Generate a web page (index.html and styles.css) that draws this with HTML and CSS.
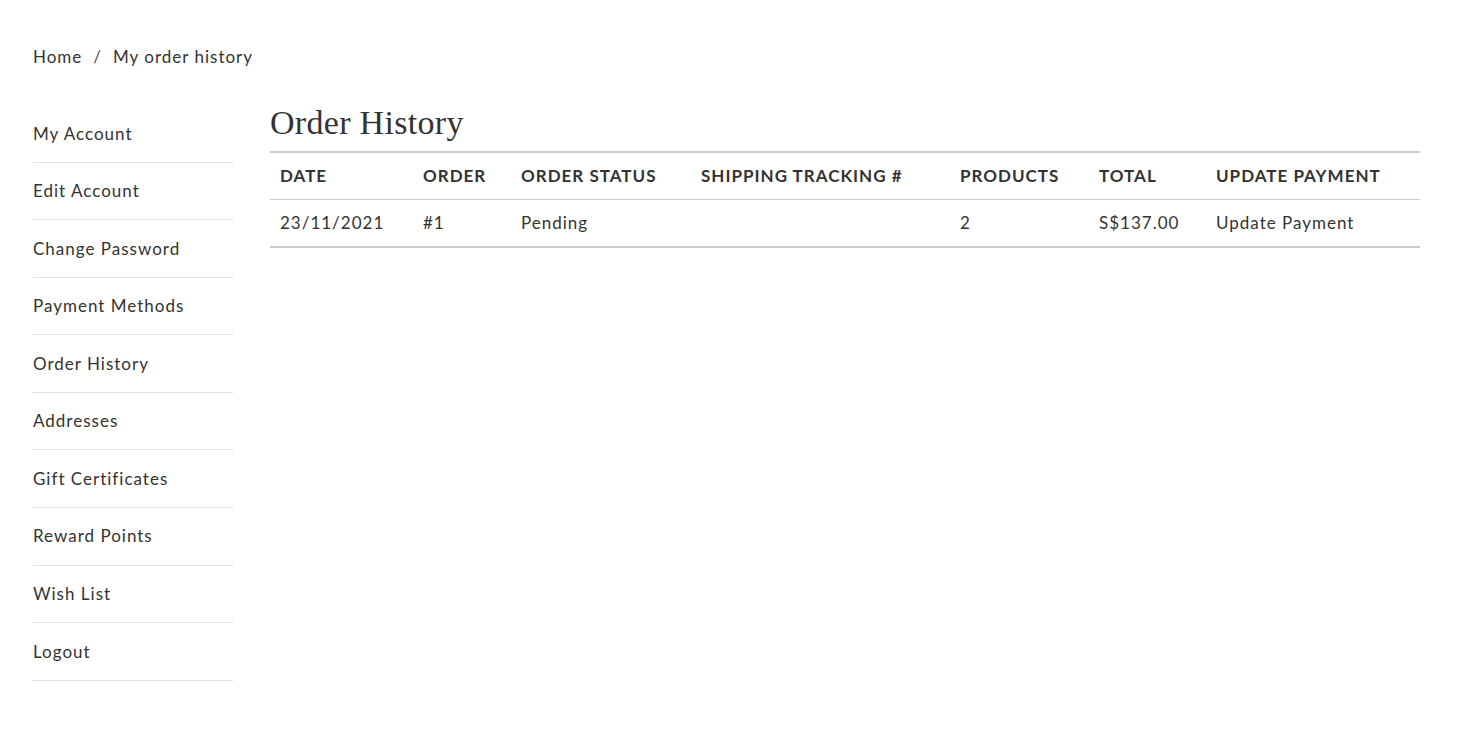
FILE: index.html
```html
<!DOCTYPE html>
<html>
<head>
<meta charset="utf-8">
<link rel="stylesheet" href="styles.css">
</head>
<body>
<div class="page">
  <nav class="breadcrumb">
    <a href="#">Home</a><span class="sep">/</span><span>My order history</span>
  </nav>
  <div class="layout">
    <aside class="sidebar">
      <ul class="menu">
        <li><a href="#">My Account</a></li>
        <li><a href="#">Edit Account</a></li>
        <li><a href="#">Change Password</a></li>
        <li><a href="#">Payment Methods</a></li>
        <li><a href="#">Order History</a></li>
        <li><a href="#">Addresses</a></li>
        <li><a href="#">Gift Certificates</a></li>
        <li><a href="#">Reward Points</a></li>
        <li><a href="#">Wish List</a></li>
        <li><a href="#">Logout</a></li>
      </ul>
    </aside>
    <main class="content">
      <h1 class="title">Order History</h1>
      <table class="orders">
        <colgroup>
          <col class="c-date"><col class="c-order"><col class="c-status"><col class="c-track"><col class="c-prod"><col class="c-total"><col class="c-pay">
        </colgroup>
        <thead>
          <tr>
            <th>Date</th><th>Order</th><th>Order Status</th><th>Shipping Tracking #</th><th>Products</th><th>Total</th><th>Update Payment</th>
          </tr>
        </thead>
        <tbody>
          <tr>
            <td>23/11/2021</td><td>#1</td><td>Pending</td><td></td><td>2</td><td>S$137.00</td><td><a href="#">Update Payment</a></td>
          </tr>
        </tbody>
      </table>
    </main>
  </div>
</div>
</body>
</html>
```
FILE: styles.css
```css
html, body {
  margin: 0;
  padding: 0;
  background: #fff;
}
body {
  font-family: Lato, "Open Sans", sans-serif;
  font-size: 17px;
  letter-spacing: 1px;
  color: #333;
}
a {
  color: inherit;
  text-decoration: none;
}
.page {
  padding: 45px 56px 40px 33px;
}
.breadcrumb {
  line-height: 24px;
  display: flex;
}
.breadcrumb .sep {
  margin: 0 11px;
  color: #555;
}
.layout {
  display: flex;
  gap: 37px;
  margin-top: 36px;
}
.sidebar {
  width: 200px;
  flex: 0 0 200px;
}
.menu {
  list-style: none;
  margin: 0;
  padding: 0;
}
.menu li {
  border-bottom: 1px solid #e0e0e0;
  padding: 16.5px 0 15.5px;
  line-height: 24.56px;
}
.content {
  flex: 1;
}
.title {
  margin: 0 0 10px;
  font-family: "Liberation Serif", "DejaVu Serif", serif;
  font-weight: normal;
  font-size: 34px;
  letter-spacing: 0.3px;
  line-height: 36px;
  color: #333;
}
.orders {
  width: 100%;
  border-collapse: collapse;
  table-layout: fixed;
  border-top: 2px solid #ccc;
  border-bottom: 2px solid #ccc;
}
.orders th,
.orders td {
  text-align: left;
  padding: 11px 10px;
  line-height: 24px;
  white-space: nowrap;
}
.orders th {
  font-weight: bold;
  text-transform: uppercase;
  border-bottom: 1px solid #ccc;
}
.c-date { width: 143px; }
.c-order { width: 98px; }
.c-status { width: 180px; }
.c-track { width: 259px; }
.c-prod { width: 139px; }
.c-total { width: 117px; }
.c-pay { width: auto; }
```
